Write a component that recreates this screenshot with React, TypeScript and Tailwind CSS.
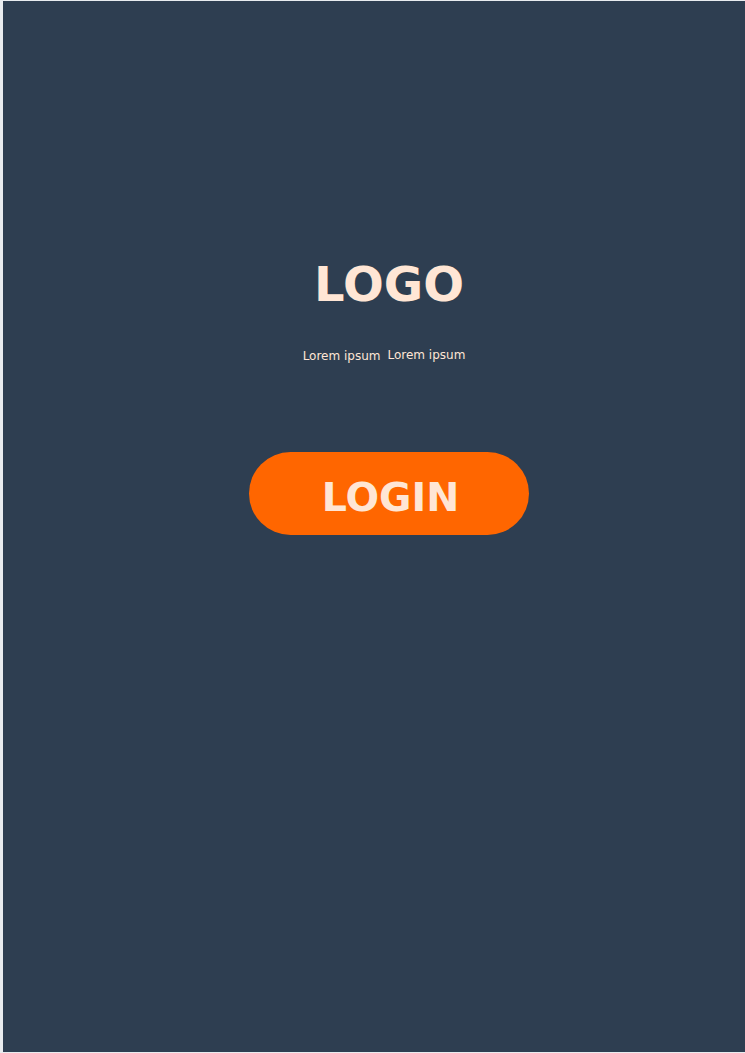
export default function App() {
  return (
    <div className="h-[1053px] w-[745px] bg-[#e9ecef] pl-[3px] py-px">
      <div
        className="flex h-full w-full flex-col items-center bg-[#2e3e51] pl-[30px] text-[#ffe6d5]"
        style={{ fontFamily: '"DejaVu Sans", sans-serif' }}
      >
        <h1 className="mt-[259px] text-[48px] font-bold leading-none">LOGO</h1>
        <div className="mt-[41px] mr-[10px] flex items-start gap-[7px] text-[12px] leading-none">
          <span className="mt-px">Lorem ipsum</span>
          <span>Lorem ipsum</span>
        </div>
        <button className="mt-[90px] flex h-[83px] w-[280px] items-center justify-center rounded-full bg-[#ff6600] pt-[8px] pl-[3px] text-[39.5px] font-bold leading-none text-[#ffe6d5]">
          LOGIN
        </button>
      </div>
    </div>
  );
}
